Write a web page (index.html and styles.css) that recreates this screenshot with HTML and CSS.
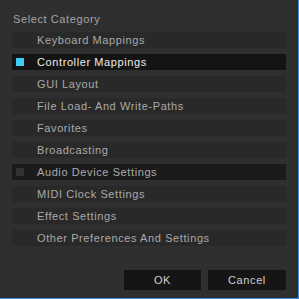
FILE: index.html
```html
<!DOCTYPE html>
<html>
<head>
<meta charset="utf-8">
<link rel="stylesheet" href="styles.css">
</head>
<body>
<div class="dialog">
  <div class="title">Select Category</div>
  <ul class="list">
    <li class="row"><span class="box"></span><span class="label">Keyboard Mappings</span></li>
    <li class="row selected"><span class="box on"></span><span class="label">Controller Mappings</span></li>
    <li class="row"><span class="box"></span><span class="label">GUI Layout</span></li>
    <li class="row"><span class="box"></span><span class="label">File Load- And Write-Paths</span></li>
    <li class="row"><span class="box"></span><span class="label">Favorites</span></li>
    <li class="row"><span class="box"></span><span class="label">Broadcasting</span></li>
    <li class="row dim"><span class="box off"></span><span class="label">Audio Device Settings</span></li>
    <li class="row"><span class="box"></span><span class="label">MIDI Clock Settings</span></li>
    <li class="row"><span class="box"></span><span class="label">Effect Settings</span></li>
    <li class="row"><span class="box"></span><span class="label">Other Preferences And Settings</span></li>
  </ul>
  <div class="buttons">
    <button class="btn">OK</button>
    <button class="btn">Cancel</button>
  </div>
</div>
</body>
</html>
```
FILE: styles.css
```css
html, body {
  margin: 0;
  padding: 0;
  background: #2f2f2f;
}
.dialog {
  width: 298px;
  height: 298px;
  border-right: 1px solid #3a8ee6;
  border-bottom: 1px solid #3a8ee6;
  background: #2f2f2f;
  font-family: "Liberation Sans", Arial, sans-serif;
  font-size: 11px;
  letter-spacing: 0.6px;
  color: #aaaaaa;
  display: flex;
  flex-direction: column;
}
.title {
  padding: 12px 0 6px 13px;
  line-height: 14px;
  color: #a4a4a4;
}
.list {
  list-style: none;
  margin: 0;
  padding: 0 12px;
  display: flex;
  flex-direction: column;
  gap: 6px;
}
.row {
  height: 16px;
  background: #292929;
  display: flex;
  align-items: center;
  line-height: 16px;
}
.row.selected {
  background: #141414;
  color: #ececec;
}
.row.dim {
  background: #1b1b1b;
}
.box {
  width: 8px;
  height: 8px;
  margin-left: 4px;
  flex: none;
}
.box.on {
  background: #3ccef6;
}
.box.off {
  background: #333333;
}
.label {
  margin-left: 13px;
  white-space: nowrap;
}
.buttons {
  margin-top: 24px;
  display: flex;
  justify-content: flex-end;
  gap: 7px;
  padding-right: 12px;
}
.btn {
  width: 77px;
  height: 20px;
  border: none;
  background: #151515;
  color: #cfcfcf;
  font-family: "Liberation Sans", Arial, sans-serif;
  font-size: 11px;
  letter-spacing: 0.6px;
  padding: 0;
}
.btn + .btn {
  width: 78px;
}
```
